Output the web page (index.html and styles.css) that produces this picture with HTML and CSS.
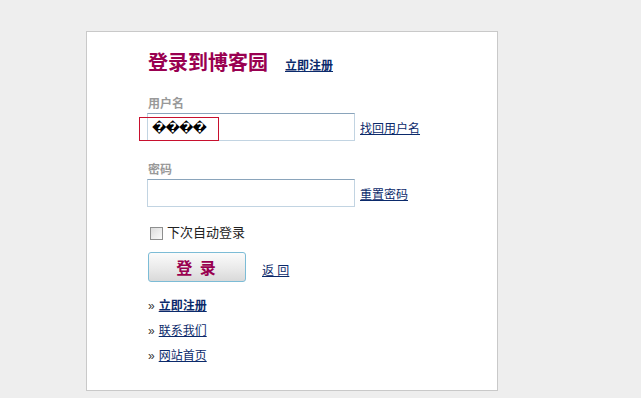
FILE: index.html
```html
<!DOCTYPE html>
<html lang="zh-CN">
<head>
  <meta charset="UTF-8">
  <title>登录到博客园</title>
  <link rel="stylesheet" href="styles.css">
</head>
<body>

  <div class="login-box">
    <div class="title-row">
      <h1>登录到博客园</h1>
      <a href="#" class="reg-link">立即注册</a>
    </div>

    <div class="label">用户名</div>
    <div class="field-row">
      <div class="input-wrap">
        <input type="text" class="text-input bad-chars" value="����">
        <div class="mark"></div>
      </div>
      <a href="#" class="side-link">找回用户名</a>
    </div>

    <div class="label label-pwd">密码</div>
    <div class="field-row">
      <div class="input-wrap">
        <input type="password" class="text-input">
      </div>
      <a href="#" class="side-link">重置密码</a>
    </div>

    <label class="remember">
      <span class="check"></span>下次自动登录
    </label>

    <div class="button-row">
      <button class="login-btn">登 录</button>
      <a href="#" class="back-link">返 回</a>
    </div>

    <ul class="links">
      <li><a href="#" class="strong">立即注册</a></li>
      <li><a href="#">联系我们</a></li>
      <li><a href="#">网站首页</a></li>
    </ul>
  </div>

</body>
</html>
```

FILE: styles.css
```css
body {
  margin: 0;
  background-color: #eeeeee;
  font-family: "Liberation Sans", "Noto Sans CJK SC", sans-serif;
  font-size: 12px;
}
a {
  color: #0b2a6b;
  text-decoration: underline;
}
.login-box {
  margin: 31px 0 0 86px;
  width: 412px;
  height: 360px;
  background: #fff;
  border: 1px solid #c9c9c9;
  padding: 19px 0 0 61px;
  box-sizing: border-box;
}
.title-row {
  display: flex;
  align-items: baseline;
  height: 24px;
}
h1 {
  margin: 0;
  font-size: 20px;
  line-height: 24px;
  font-weight: bold;
  color: #990050;
}
.reg-link {
  margin-left: 17px;
  font-size: 12px;
  font-weight: bold;
}
.label {
  margin-top: 21px;
  color: #999;
  font-weight: bold;
  line-height: 16px;
}
.label-pwd {
  margin-top: 21px;
}
.field-row {
  display: flex;
  align-items: center;
  margin-top: 1px;
}
.input-wrap {
  position: relative;
  margin-left: -1px;
}
.text-input {
  display: block;
  width: 208px;
  height: 28px;
  margin: 0;
  padding: 0 4px;
  border: 1px solid #c2d4e2;
  border-top-color: #8aa4bb;
  box-sizing: border-box;
  font-size: 13px;
  background: #fff;
}
.bad-chars {
  font-family: "DejaVu Sans", sans-serif;
  font-weight: bold;
  color: #000;
  letter-spacing: -1px;
}
.mark {
  position: absolute;
  left: -8px;
  top: 4px;
  width: 80px;
  height: 24px;
  border: 1px solid #c8102e;
  box-sizing: border-box;
}
.side-link {
  margin-left: 5px;
  font-size: 12px;
}
.remember {
  display: flex;
  align-items: center;
  margin-top: 18px;
  font-size: 13px;
  color: #222;
  line-height: 16px;
}
.check {
  width: 11px;
  height: 11px;
  margin: 0 4px 0 2px;
  border: 1px solid #8e8f8f;
  background: linear-gradient(135deg, #dcdcdc, #fbfbfb);
}
.button-row {
  display: flex;
  align-items: center;
  margin-top: 11px;
}
.login-btn {
  width: 98px;
  height: 30px;
  padding: 0;
  border: 1px solid #7cbcd6;
  border-radius: 3px;
  background: linear-gradient(#fbfbfb, #e8e8e8 60%, #d9d9d9);
  color: #990050;
  font-family: "Noto Sans CJK SC", sans-serif;
  font-size: 16px;
  font-weight: bold;
  letter-spacing: 2px;
}
.back-link {
  margin-left: 16px;
  margin-top: 5px;
}
.links {
  list-style: none;
  margin: 16px 0 0;
  padding: 0;
}
.links li {
  height: 25px;
  line-height: 16px;
}
.links li::before {
  content: "»";
  font-size: 12px;
  color: #333;
  margin-right: 4px;
}
.links a.strong {
  font-weight: bold;
}
```
